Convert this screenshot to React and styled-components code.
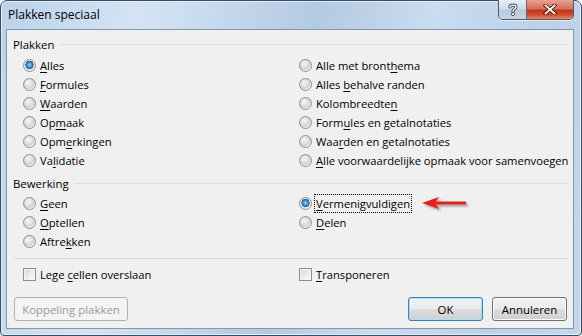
import styled, { createGlobalStyle } from 'styled-components';

const Global = createGlobalStyle`
  html, body { margin: 0; background: #ffffff; }
  body { font-family: 'Open Sans', 'Noto Sans', sans-serif; }
`;

const Window = styled.div`
  width: 582px;
  height: 336px;
  box-sizing: border-box;
  border: 1px solid #3b4b60;
  border-radius: 7px 7px 4px 4px;
  background: linear-gradient(100deg, #bcd2ea 0%, #d4e4f4 22%, #c6d9ee 34%, #b3cae3 50%, #c9dcf0 68%, #bcd2e9 85%, #c3d7ec 100%);
  box-shadow: inset 0 0 0 1px #e3edf7;
  display: flex;
  flex-direction: column;
  padding: 0 7px 6px 5px;
`;

const TitleBar = styled.div`
  height: 28px;
  display: flex;
  align-items: flex-start;
`;

const Title = styled.div`
  padding-left: 2px;
  line-height: 28px;
  font-size: 12px;
  color: #000;
`;

const Captions = styled.div`
  margin-left: auto;
  margin-top: -1px;
  display: flex;
  border: 1px solid #4d5b6d;
  border-top: none;
  border-radius: 0 0 5px 5px;
  overflow: hidden;
  box-shadow: 0 1px 0 rgba(255, 255, 255, 0.6);
`;

const CaptionButton = styled.div`
  width: ${p => p.$w}px;
  height: 19px;
  display: flex;
  align-items: center;
  justify-content: center;
  background: ${p => p.$close
    ? 'linear-gradient(#e8a293 0%, #d6705c 45%, #c2341b 55%, #d34f2f 80%, #e58a6a 100%)'
    : 'linear-gradient(#e6edf5 0%, #d2dde9 45%, #b9c9da 55%, #c7d5e4 100%)'};
  & + & { border-left: 1px solid #5e6a7a; }
`;

const Client = styled.div`
  flex: 1;
  border: 1px solid #8396b0;
  background: #f0f0f0;
  padding: 6px 5px 7px 6px;
  display: flex;
  flex-direction: column;
`;

const GroupHeader = styled.div`
  height: 16px;
  display: flex;
  align-items: center;
  gap: 5px;
  margin-top: ${p => p.$top || 0}px;
  font-size: 11.4px;
  color: #000;
  &::after {
    content: '';
    flex: 1;
    height: 1px;
    background: #d5dfe5;
  }
`;

const OptionGrid = styled.div`
  display: grid;
  grid-template-columns: 276px 1fr;
  grid-auto-flow: column;
  grid-template-rows: repeat(${p => p.$rows}, 19px);
  padding-left: 10px;
  margin-top: ${p => p.$top || 0}px;
`;

const Option = styled.label`
  display: flex;
  align-items: center;
  gap: 4px;
  font-size: 11.2px;
  color: #000;
  white-space: nowrap;
`;

const Radio = styled.span`
  width: 13px;
  height: 13px;
  box-sizing: border-box;
  border-radius: 50%;
  border: 1px solid #8d8e8f;
  flex: none;
  background: ${p => p.$on
    ? 'radial-gradient(circle at 50% 45%, #9ad3f5 0%, #3a8fcb 30%, #1b5e98 48%, #e4e4e4 52%, #f7f7f7 100%)'
    : 'radial-gradient(circle at 40% 35%, #f6f6f6 0%, #dcdcdc 45%, #cfcfcf 55%, #f8f8f8 75%, #ffffff 100%)'};
`;

const Check = styled.span`
  width: 13px;
  height: 13px;
  box-sizing: border-box;
  border: 1px solid #8e8f8f;
  flex: none;
  background: linear-gradient(135deg, #d5d5d5 0%, #eeeeee 60%, #fbfbfb 100%);
  box-shadow: inset 0 0 0 1px #f4f4f4;
`;

const Label = styled.span`
  outline: ${p => p.$focus ? '1px dotted #000' : 'none'};
  outline-offset: 1px;
`;

const Key = styled.u`
  text-decoration: underline;
  text-underline-offset: 2px;
`;

const Separator = styled.div`
  height: 1px;
  background: #d5dfe5;
  margin-top: 7px;
`;

const Arrow = styled.svg`
  margin-left: 7px;
  flex: none;
`;

const ButtonRow = styled.div`
  display: flex;
  gap: 9px;
  margin-top: 13px;
  padding: 0 1px 0 1px;
`;

const Button = styled.div`
  height: 24px;
  box-sizing: border-box;
  width: ${p => p.$w}px;
  display: flex;
  align-items: center;
  justify-content: center;
  font-size: 11.4px;
  border-radius: 3px;
  border: 1px solid ${p => p.$disabled ? '#adb2b5' : p.$default ? '#3c7fb1' : '#707070'};
  color: ${p => p.$disabled ? '#9a9a9a' : '#000'};
  background: ${p => p.$disabled
    ? '#f4f4f4'
    : 'linear-gradient(#f2f2f2 0%, #ebebeb 50%, #dddddd 51%, #cfcfcf 100%)'};
  box-shadow: ${p => p.$default ? 'inset 0 0 0 1px #a6e2f7' : p.$disabled ? 'none' : 'inset 0 0 0 1px #fcfcfc'};
  &:first-child { margin-right: auto; }
`;

function RadioOption({ on, focus, children, extra }) {
  return (
    <Option>
      <Radio $on={on} />
      <Label $focus={focus}>{children}</Label>
      {extra}
    </Option>
  );
}

function CheckOption({ children }) {
  return (
    <Option>
      <Check />
      <Label>{children}</Label>
    </Option>
  );
}

const pasteLeft = [
  [true, <><Key>A</Key>lles</>],
  [false, <><Key>F</Key>ormules</>],
  [false, <><Key>W</Key>aarden</>],
  [false, <>Op<Key>m</Key>aak</>],
  [false, <>Opm<Key>e</Key>rkingen</>],
  [false, <>Va<Key>l</Key>idatie</>],
];

const pasteRight = [
  <>Alle met bront<Key>h</Key>ema</>,
  <>Alles <Key>b</Key>ehalve randen</>,
  <>Kolombreedte<Key>n</Key></>,
  <>Form<Key>u</Key>les en getalnotaties</>,
  <>Waa<Key>r</Key>den en getalnotaties</>,
  <><Key>A</Key>lle voorwaardelijke opmaak voor samenvoegen</>,
];

function RedArrow() {
  return (
    <Arrow width="50" height="18" viewBox="0 0 50 18">
      <defs>
        <filter id="sh" x="-20%" y="-40%" width="140%" height="180%">
          <feDropShadow dx="2" dy="2" stdDeviation="1.2" floodColor="#000" floodOpacity="0.35" />
        </filter>
      </defs>
      <path d="M1 8 L18 2 L15 6.5 L45 6.5 L45 9.5 L15 9.5 L18 14 Z" fill="#e3221d" filter="url(#sh)" />
    </Arrow>
  );
}

export default function App() {
  return (
    <>
      <Global />
      <Window>
        <TitleBar>
          <Title>Plakken speciaal</Title>
          <Captions>
            <CaptionButton $w={27}>
              <svg width="10" height="13" viewBox="0 0 10 13">
                <path d="M2 4 C2 1.5 8 1.5 8 4 C8 6 5 6 5 8.2" fill="none" stroke="#3d4a5a" strokeWidth="3.2" strokeLinecap="round" />
                <path d="M2 4 C2 1.5 8 1.5 8 4 C8 6 5 6 5 8.2" fill="none" stroke="#fff" strokeWidth="1.4" strokeLinecap="round" />
                <circle cx="5" cy="11" r="1.6" fill="#fff" stroke="#3d4a5a" strokeWidth="0.9" />
              </svg>
            </CaptionButton>
            <CaptionButton $w={46} $close>
              <svg width="14" height="11" viewBox="0 0 14 11">
                <path d="M2.5 1.5 L11.5 9.5 M11.5 1.5 L2.5 9.5" stroke="#4a1a12" strokeWidth="3.6" strokeLinecap="square" />
                <path d="M2.5 1.5 L11.5 9.5 M11.5 1.5 L2.5 9.5" stroke="#fff" strokeWidth="1.8" strokeLinecap="square" />
              </svg>
            </CaptionButton>
          </Captions>
        </TitleBar>
        <Client>
          <GroupHeader>Plakken</GroupHeader>
          <OptionGrid $rows={6} $top={4}>
            {pasteLeft.map(([on, label], i) => (
              <RadioOption key={'l' + i} on={on}>{label}</RadioOption>
            ))}
            {pasteRight.map((label, i) => (
              <RadioOption key={'r' + i}>{label}</RadioOption>
            ))}
          </OptionGrid>
          <GroupHeader $top={5}>Bewerking</GroupHeader>
          <OptionGrid $rows={3} $top={3}>
            <RadioOption><Key>G</Key>een</RadioOption>
            <RadioOption><Key>O</Key>ptellen</RadioOption>
            <RadioOption>Aftre<Key>k</Key>ken</RadioOption>
            <RadioOption on focus extra={<RedArrow />}><Key>V</Key>ermenigvuldigen</RadioOption>
            <RadioOption><Key>D</Key>elen</RadioOption>
          </OptionGrid>
          <Separator />
          <OptionGrid $rows={1} $top={6}>
            <CheckOption>Lege <Key>c</Key>ellen overslaan</CheckOption>
            <CheckOption><Key>T</Key>ransponeren</CheckOption>
          </OptionGrid>
          <ButtonRow>
            <Button $w={114} $disabled>Koppeling plakken</Button>
            <Button $w={75} $default>OK</Button>
            <Button $w={75}>Annuleren</Button>
          </ButtonRow>
        </Client>
      </Window>
    </>
  );
}
